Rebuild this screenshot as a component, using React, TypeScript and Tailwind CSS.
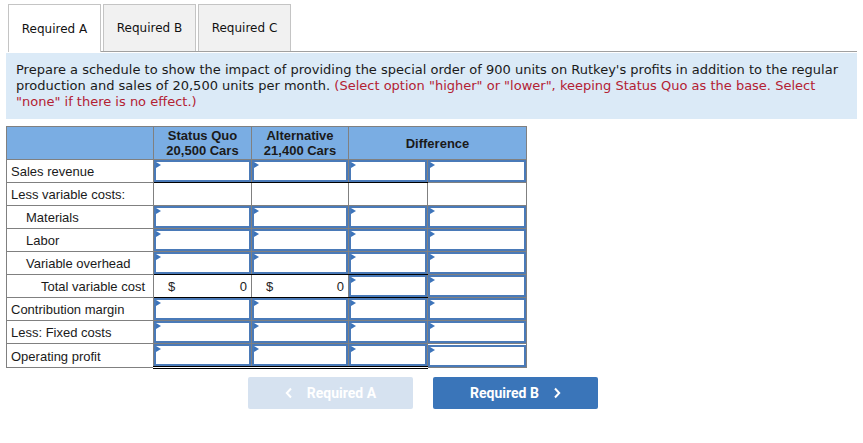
import React from 'react';

type Row = {
  label: string;
  indent: number;
  cells: ('in' | 'blank' | 'total')[];
  bottomBlack?: boolean;
  doubleBottom?: boolean;
};

const rows: Row[] = [
  { label: 'Sales revenue', indent: 0, cells: ['in', 'in', 'in', 'in'], bottomBlack: true },
  { label: 'Less variable costs:', indent: 0, cells: ['blank', 'blank', 'blank', 'blank'] },
  { label: 'Materials', indent: 15, cells: ['in', 'in', 'in', 'in'] },
  { label: 'Labor', indent: 15, cells: ['in', 'in', 'in', 'in'] },
  { label: 'Variable overhead', indent: 15, cells: ['in', 'in', 'in', 'in'], bottomBlack: true },
  { label: 'Total variable cost', indent: 30, cells: ['total', 'total', 'in', 'in'], bottomBlack: true },
  { label: 'Contribution margin', indent: 0, cells: ['in', 'in', 'in', 'in'] },
  { label: 'Less: Fixed costs', indent: 0, cells: ['in', 'in', 'in', 'in'], bottomBlack: true },
  { label: 'Operating profit', indent: 0, cells: ['in', 'in', 'in', 'in'], doubleBottom: true },
];

const InputBox = () => (
  <div className="relative h-[22px] border-2 border-[#4a7ab8] bg-white">
    <span className="absolute left-0 top-0 h-0 w-0 border-y-[3px] border-l-[5px] border-y-transparent border-l-[#3d74ba]" />
  </div>
);

const Tab = ({ label, active }: { label: string; active?: boolean }) => (
  <div
    className={
      active
        ? 'flex h-[48px] w-[93px] items-center justify-center border border-b-0 border-[#c4c4c4] bg-white -mb-px'
        : 'flex h-[47px] w-[93px] items-center justify-center border border-b-0 border-[#c4c4c4] bg-[#f1f1f1]'
    }
  >
    <span className="text-[12px] text-[#111]">{label}</span>
  </div>
);

export default function App() {
  return (
    <div className="h-[443px] w-[863px] bg-white" style={{ fontFamily: '"DejaVu Sans", Verdana, sans-serif' }}>
      <div className="flex items-end gap-[2px] pl-[8px] pt-[4px]">
        <Tab label="Required A" active />
        <Tab label="Required B" />
        <Tab label="Required C" />
      </div>
      <div className="ml-[8px] mr-[6px] border-t border-[#a0a0a0]" />

      <div className="ml-[6px] mr-[6px] mt-px bg-[#dbeaf7] pl-[10px] pr-[8px] pb-[9px] pt-[9px] text-[13px] leading-[16px] text-[#1a1a1a]">
        Prepare a schedule to show the impact of providing the special order of 900 units on Rutkey's profits in addition to the regular
        production and sales of 20,500 units per month.{' '}
        <span className="text-[#b32133]">
          (Select option "higher" or "lower", keeping Status Quo as the base. Select "none" if there is no effect.)
        </span>
      </div>

      <table
        className="ml-[6px] mt-[7px] border-collapse text-[13px] text-[#1a1a1a]"
        style={{ fontFamily: '"Liberation Sans", Arial, sans-serif' }}
      >
        <colgroup>
          <col className="w-[147px]" />
          <col className="w-[98px]" />
          <col className="w-[97px]" />
          <col className="w-[79px]" />
          <col className="w-[99px]" />
        </colgroup>
        <thead>
          <tr className="h-[33px] bg-[#7aade3] font-bold leading-[15px]">
            <th className="border border-[#808080]" />
            <th className="border border-[#808080] text-center font-bold">
              Status Quo
              <br />
              20,500 Cars
            </th>
            <th className="border border-[#808080] text-center font-bold">
              Alternative
              <br />
              21,400 Cars
            </th>
            <th colSpan={2} className="border border-[#808080] text-center font-bold">
              Difference
            </th>
          </tr>
        </thead>
        <tbody>
          {rows.map((r) => (
            <tr key={r.label} className="h-[23px]">
              <td className="border border-[#808080] pb-0 pt-[2px] pr-1" style={{ paddingLeft: 4 + r.indent }}>
                {r.label}
              </td>
              {r.cells.map((c, i) => {
                const black = i < 3;
                let cls = 'border border-[#808080] p-0';
                if (black && r.bottomBlack) cls += ' border-b-black';
                if (black && r.doubleBottom) cls += ' border-b-[3px] border-b-black border-double';
                return (
                  <td key={i} className={cls}>
                    {c === 'in' && <InputBox />}
                    {c === 'blank' && <div className="h-[22px]" />}
                    {c === 'total' && (
                      <div className="flex h-[22px] items-center justify-between pl-[14px] pr-[4px] pt-[2px] text-[#222]">
                        <span>$</span>
                        <span>0</span>
                      </div>
                    )}
                  </td>
                );
              })}
            </tr>
          ))}
        </tbody>
      </table>

      <div
        className="mt-[8px] flex gap-[20px] pl-[248px]"
        style={{ fontFamily: 'Roboto, "Liberation Sans", sans-serif' }}
      >
        <button className="flex h-[32px] w-[165px] items-center justify-center gap-[14px] rounded-[2px] bg-[#d6e2f0] text-[14px] font-bold text-white">
          <svg width="8" height="12" viewBox="0 0 8 12">
            <path d="M6 1.5 1.8 6 6 10.5" fill="none" stroke="white" strokeWidth="2" />
          </svg>
          Required A
        </button>
        <button className="flex h-[32px] w-[165px] items-center justify-center gap-[14px] rounded-[2px] bg-[#3a75b9] text-[14px] font-bold text-white">
          Required B
          <svg width="8" height="12" viewBox="0 0 8 12">
            <path d="M2 1.5 6.2 6 2 10.5" fill="none" stroke="white" strokeWidth="2" />
          </svg>
        </button>
      </div>
    </div>
  );
}
